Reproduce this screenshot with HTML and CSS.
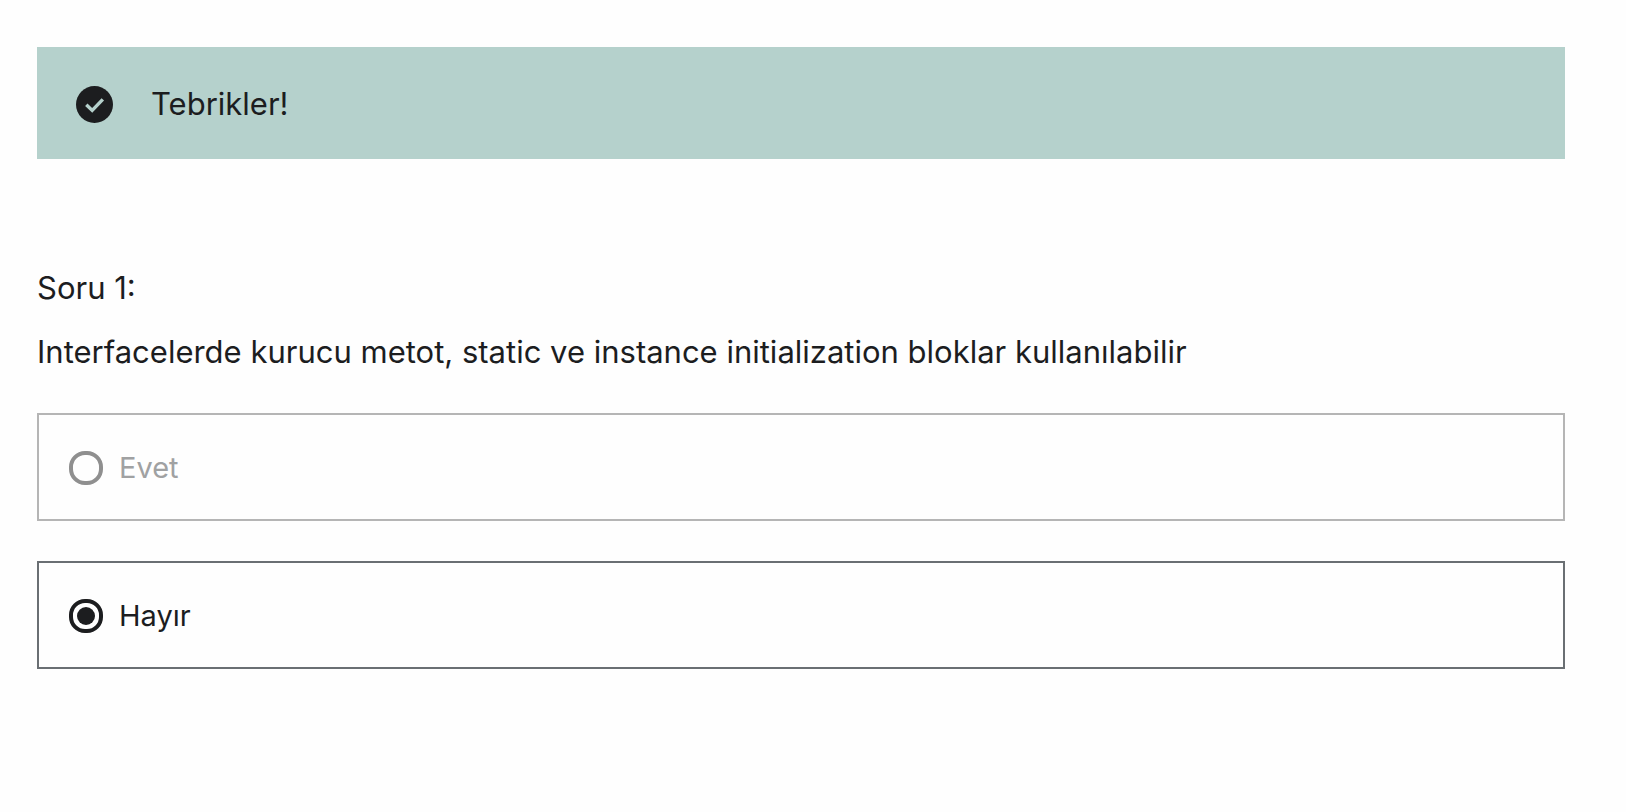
FILE: index.html
```html
<!DOCTYPE html>
<html lang="tr">
<head>
<meta charset="utf-8">
<meta name="viewport" content="width=device-width, initial-scale=1">
<title>Soru 1</title>
<link rel="stylesheet" href="styles.css">
</head>
<body>
<main class="quiz">
  <div class="alert" role="status">
    <svg class="alert-icon" viewBox="0 0 37 37" aria-hidden="true">
      <circle class="alert-disc" cx="18.5" cy="18.5" r="18.5"/>
      <path class="alert-check" d="M10.3 18.7 L16.2 24.4 L26.8 13.4"/>
    </svg>
    <p class="alert-text">Tebrikler!</p>
  </div>
  <form class="question">
    <p class="question-title">Soru 1:</p>
    <p class="question-text" id="question-text">Interfacelerde kurucu metot, static ve instance initialization bloklar kullanılabilir</p>
    <div class="answers" role="radiogroup" aria-labelledby="question-text">
      <label class="answer answer-disabled">
        <input class="radio" type="radio" name="answer" value="evet" disabled>
        <span>Evet</span>
      </label>
      <label class="answer">
        <input class="radio" type="radio" name="answer" value="hayir" checked>
        <span>Hayır</span>
      </label>
    </div>
  </form>
</main>
</body>
</html>
```
FILE: styles.css
```css
* {
  box-sizing: border-box;
}

body {
  margin: 0;
  background: #fefefe;
  color: #1c1d1f;
  font-family: Inter, "Liberation Sans", sans-serif;
  font-size: 31px;
  line-height: 44px;
}

p {
  margin: 0;
}

.quiz {
  padding: 47px 61px 47px 37px;
}

.alert {
  display: flex;
  align-items: center;
  gap: 38px;
  padding: 35px 39px 33px;
  background: #b5d1cc;
}

.alert-icon {
  flex: none;
  width: 37px;
  height: 37px;
}

.alert-disc {
  fill: #1c1d1f;
}

.alert-check {
  fill: none;
  stroke: #b5d1cc;
  stroke-width: 3.4;
}

.question {
  margin-top: 107px;
}

.question-text {
  margin-top: 20px;
}

.answers {
  display: grid;
  gap: 40px;
  margin-top: 39px;
}

.answer {
  display: flex;
  align-items: center;
  gap: 16px;
  padding: 33px 30px 31px;
  border: 2px solid #6a6f73;
  font-size: 29px;
  line-height: 40px;
}

.answer-disabled {
  border-color: #b5b5b5;
  color: #a0a1a2;
}

.radio {
  display: grid;
  place-items: center;
  flex: none;
  width: 34px;
  height: 34px;
  margin: 0;
  border: 4px solid #1c1d1f;
  border-radius: 16px;
  appearance: none;
}

.radio:checked::before {
  content: "";
  width: 18px;
  height: 18px;
  border-radius: 50%;
  background: #1c1d1f;
}

.radio:disabled {
  border-color: #8f8f8f;
}
```
